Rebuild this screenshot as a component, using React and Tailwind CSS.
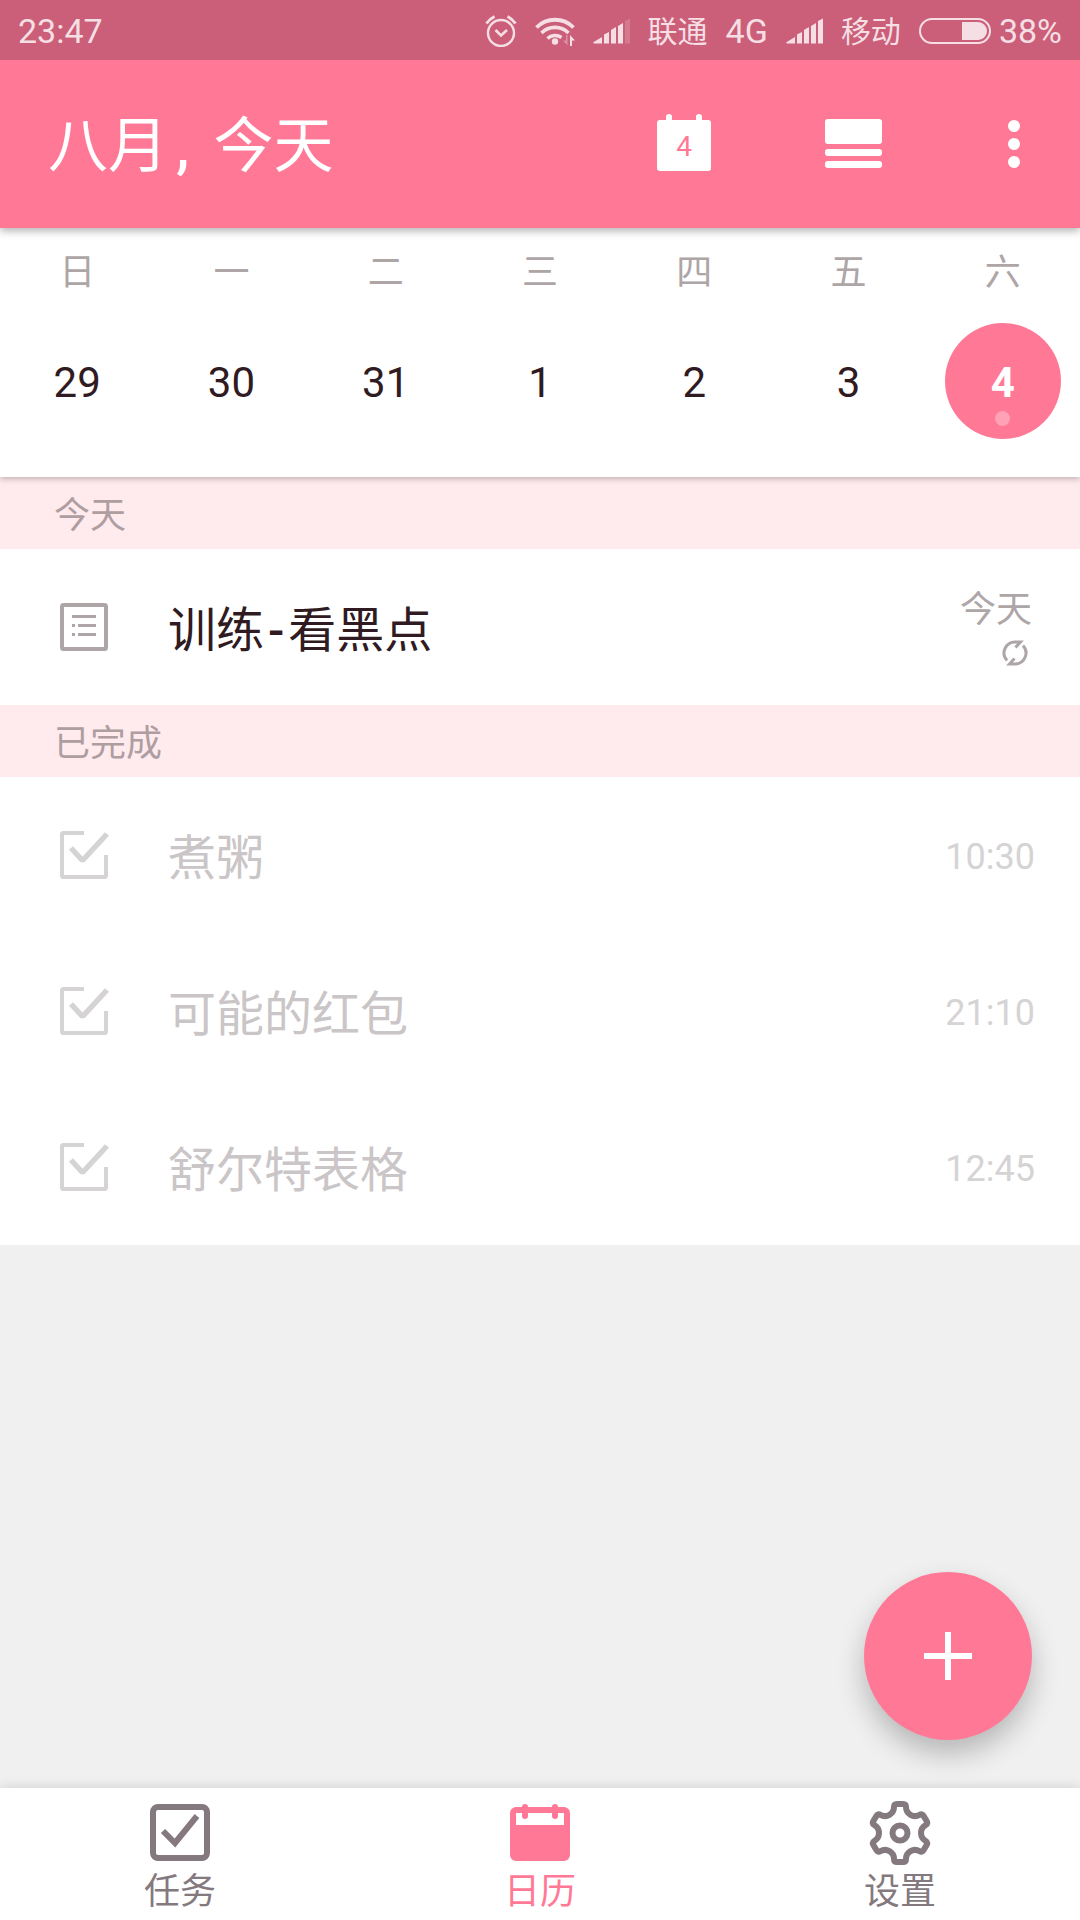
const week = [
  { label: "日", day: 29 },
  { label: "一", day: 30 },
  { label: "二", day: 31 },
  { label: "三", day: 1 },
  { label: "四", day: 2 },
  { label: "五", day: 3 },
  { label: "六", day: 4, today: true },
];

const doneTasks = [
  { title: "煮粥", time: "10:30" },
  { title: "可能的红包", time: "21:10" },
  { title: "舒尔特表格", time: "12:45" },
];

const AlarmIcon = () => (
  <svg width="32" height="32" viewBox="0 0 32 32" fill="none" stroke="currentColor">
    <circle cx="16" cy="18" r="13" strokeWidth="2.4" />
    <path d="M10.5 15l5.5 5.5 6-5.5" strokeWidth="2.6" />
    <path d="M1.5 8.5Q4.5 4 9.5 1.5M30.5 8.5Q27.5 4 22.5 1.5" strokeWidth="3" />
  </svg>
);

const WifiIcon = () => (
  <svg width="40" height="32" viewBox="0 0 40 32" fill="none" stroke="currentColor">
    <path d="M1.5 12.5a26 26 0 0 1 37 0" strokeWidth="3.8" />
    <path d="M6.5 18a19 19 0 0 1 27 0" strokeWidth="3.6" />
    <path d="M12.5 23.5a11 11 0 0 1 14 -1" strokeWidth="3.4" />
    <circle cx="20" cy="26.5" r="3.2" fill="currentColor" stroke="none" />
    <path d="M32.5 20v10.5l-4.5-5h3V20z" fill="currentColor" stroke="none" opacity="0.4" />
    <path d="M35 31V20l5 5.500h-3V31z" fill="currentColor" stroke="none" />
  </svg>
);

const SignalIcon = ({ weak }) => (
  <svg width="37" height="26" viewBox="0 0 37 26" fill="currentColor">
    <path d="M0 24.5L9 19v6.5H1z" />
    <path d="M11 16.5l5-2.5v11.5h-5z" />
    <path d="M18 12l5-3v16.5h-5z" />
    <path d="M25 8l5-3v20.5h-5z" />
    <path d="M32 3l5-2.5v25h-5z" opacity={weak ? 0.2 : 1} />
  </svg>
);

const BatteryIcon = () => (
  <svg width="72" height="26" viewBox="0 0 72 26">
    <rect x="1" y="1" width="70" height="24" rx="12" fill="none" stroke="currentColor" strokeWidth="2" />
    <path d="M43 4h16a9 9 0 0 1 0 18H43z" fill="currentColor" />
  </svg>
);

const ListIcon = () => (
  <svg width="50" height="50" viewBox="0 0 50 50" fill="currentColor">
    <rect x="2" y="3" width="44" height="44" rx="1.5" fill="none" stroke="currentColor" strokeWidth="4" />
    <path d="M12 13h24v3H12zM12 22h3v3h-3zM18 22h18v3H18zM12 31h3v3h-3zM18 31h18v3H18z" />
  </svg>
);

const DoneIcon = () => (
  <svg width="50" height="50" viewBox="0 0 50 50" fill="none" stroke="currentColor" strokeWidth="4">
    <path d="M24 3H3.5Q2 3 2 4.5v41Q2 47 3.5 47h41Q46 47 46 45.5V25" />
    <path d="M11 18l11.5 12.5L47 4" strokeWidth="5.5" strokeLinejoin="bevel" />
  </svg>
);

const RepeatIcon = () => (
  <svg width="26" height="26" viewBox="0 0 26 26" fill="none" stroke="currentColor" strokeWidth="3">
    <path d="M5 20.5A11 11 0 0 1 13 2h5.5l-5 5.5" />
    <path d="M21 5.5A11 11 0 0 1 13 24H7.5l5-5.5" />
  </svg>
);

const TasksIcon = () => (
  <svg width="64" height="64" viewBox="0 0 64 64" fill="none" stroke="currentColor" strokeWidth="6">
    <rect x="5" y="6" width="54" height="51" rx="5" />
    <path d="M15 30l12 12 22-27" />
  </svg>
);

const CalendarIcon = () => (
  <svg width="64" height="64" viewBox="0 0 64 64" fill="currentColor">
    <path
      fillRule="evenodd"
      d="M8 6h48a6 6 0 0 1 6 6v42a6 6 0 0 1-6 6H8a6 6 0 0 1-6-6V12a6 6 0 0 1 6-6zM8 12v12h48V12z"
    />
    <path d="M17 6v9M47 6v9" stroke="currentColor" strokeWidth="6" strokeLinecap="round" />
  </svg>
);

// one tooth and one valley, turned six times round the hub
const gearPath = () => {
  const turn = (x, y, i) => {
    const a = (i * Math.PI) / 3;
    const px = 32 + x * Math.cos(a) - y * Math.sin(a);
    const py = 32 + x * Math.sin(a) + y * Math.cos(a);
    return `${px.toFixed(2)} ${py.toFixed(2)}`;
  };
  let d = `M${turn(-6, -26, 0)}`;
  for (let i = 0; i < 6; i++) {
    d += `Q${turn(-6, -29, i)} ${turn(-3, -29, i)}L${turn(3, -29, i)}`;
    d += `Q${turn(6, -29, i)} ${turn(6, -26, i)}A9 9 0 0 0 ${turn(-6, -26, i + 1)}`;
  }
  return d + "Z";
};

const GearIcon = () => (
  <svg width="64" height="64" viewBox="0 0 64 64" fill="none" stroke="currentColor" strokeWidth="6">
    <path d={gearPath()} strokeLinejoin="round" />
    <circle cx="32" cy="32" r="7.5" />
  </svg>
);

const tabs = [
  { label: "任务", icon: TasksIcon },
  { label: "日历", icon: CalendarIcon, active: true },
  { label: "设置", icon: GearIcon },
];

const StatusBar = () => (
  <div className="z-30 flex h-[60px] items-center justify-between bg-[#cb5f79] pt-0.5 pr-[18px] pl-[18px] text-[34px] text-[#f5dfe4]">
    <span>23:47</span>
    <div className="flex items-center gap-[18px]">
      <AlarmIcon />
      <WifiIcon />
      <SignalIcon weak />
      <span className="text-[30px]">联通</span>
      <span>4G</span>
      <SignalIcon />
      <span className="text-[30px]">移动</span>
      <div className="flex items-center gap-2">
        <BatteryIcon />
        <span>38%</span>
      </div>
    </div>
  </div>
);

const Header = () => (
  <header className="z-20 flex h-[168px] items-center justify-between bg-[#ff7997] pl-12 text-white shadow-[0_3px_8px_rgba(0,0,0,0.3)]">
    <h1 className="flex pt-1.5 text-[60px]">
      <span>八月</span>
      <span className="pr-6 pl-2 font-medium">,</span>
      <span>今天</span>
    </h1>
    <div className="flex h-full">
      <button aria-label="回到今天" className="flex w-[150px] items-center justify-center">
        <svg width="54" height="62" viewBox="0 0 54 62" fill="currentColor">
          <rect y="7" width="54" height="51" rx="3" />
          <path d="M12 4v6M42 4v6" stroke="currentColor" strokeWidth="6" strokeLinecap="round" />
          <text x="27" y="43" textAnchor="middle" className="fill-[#ff7997] text-[28px]">4</text>
        </svg>
      </button>
      <button aria-label="切换视图" className="flex w-[189px] items-center justify-center">
        <svg width="57" height="50" viewBox="0 0 57 50" fill="currentColor">
          <rect width="57" height="25" rx="3" />
          <rect y="30" width="57" height="7" rx="3" />
          <rect y="42" width="57" height="7" rx="3" />
        </svg>
      </button>
      <button aria-label="更多" className="flex w-[132px] items-center justify-center">
        <svg width="12" height="48" viewBox="0 0 12 48" fill="currentColor">
          <circle cx="6" cy="6" r="6" />
          <circle cx="6" cy="24" r="6" />
          <circle cx="6" cy="42" r="6" />
        </svg>
      </button>
    </div>
  </header>
);

const WeekStrip = () => (
  <div className="z-10 grid grid-cols-7 bg-white pt-[18px] pb-[38px] text-center shadow-[0_2px_6px_rgba(0,0,0,0.25)]">
    {week.map((d) => (
      <div key={d.label} className="flex flex-col items-center gap-[23px]">
        <span className="text-4xl leading-[54px] text-[#aea5a7]">{d.label}</span>
        <button
          className={
            d.today
              ? "relative size-[116px] rounded-full bg-[#ff7997] pt-0.5 text-[42px] font-bold text-white"
              : "size-[116px] rounded-full pt-0.5 text-[42px] text-[#2f1b21]"
          }
        >
          {d.day}
          {d.today && <span className="absolute bottom-[13px] left-[50px] size-[15px] rounded-full bg-[#ffa2b7]" />}
        </button>
      </div>
    ))}
  </div>
);

const SectionTitle = ({ children }) => (
  <h2 className="flex h-[72px] items-center bg-[#ffebee] pt-1.5 pl-[54px] text-4xl text-[#ae9da1]">{children}</h2>
);

const App = () => {
  return (
    <div className="flex min-h-screen flex-col bg-[#f0f0f0] font-['Roboto','Noto_Sans_CJK_SC',sans-serif]">
      <StatusBar />
      <Header />
      <WeekStrip />

      <main className="flex-1">
        <SectionTitle>今天</SectionTitle>
        <div className="flex h-[156px] items-center bg-white pr-12 pl-[60px]">
          <span className="mr-[58px] text-[#aea5a7]">
            <ListIcon />
          </span>
          <p className="flex flex-1 pt-2 text-5xl text-[#2f1b21]">
            <span>训练</span>
            <span className="px-1 font-medium">-</span>
            <span>看黑点</span>
          </p>
          <div className="flex flex-col items-end text-[#aea5a7]">
            <span className="text-4xl leading-[44px]">今天</span>
            <span className="pt-2 pr-1">
              <RepeatIcon />
            </span>
          </div>
        </div>

        <SectionTitle>已完成</SectionTitle>
        <ul className="bg-white">
          {doneTasks.map((task) => (
            <li key={task.title} className="flex h-[156px] items-center pr-[45px] pl-[60px] text-[#d5d3d4]">
              <label className="flex flex-1 items-center">
                <input type="checkbox" defaultChecked className="sr-only" />
                <span className="mr-[58px]">
                  <DoneIcon />
                </span>
                <span className="pt-2 text-5xl text-[#cac5c6]">{task.title}</span>
              </label>
              <span className="pt-1 text-4xl">{task.time}</span>
            </li>
          ))}
        </ul>
      </main>

      <button
        aria-label="添加任务"
        className="fixed right-12 bottom-[180px] flex size-[168px] items-center justify-center rounded-full bg-[#ff7997] text-white shadow-[0_14px_28px_rgba(0,0,0,0.24)]"
      >
        <svg width="48" height="48" viewBox="0 0 48 48" stroke="currentColor" strokeWidth="6">
          <path d="M24 0v48M0 24h48" />
        </svg>
      </button>

      <nav className="grid grid-cols-3 bg-white pt-[13px] pb-1 shadow-[0_-2px_10px_rgba(0,0,0,0.1)]">
        {tabs.map(({ label, icon: Icon, active }) => (
          <a
            key={label}
            href="#"
            className={`flex flex-col items-center gap-[3px] text-4xl leading-[48px] ${active ? "text-[#ff7997]" : "text-[#84797e]"}`}
          >
            <Icon />
            <span>{label}</span>
          </a>
        ))}
      </nav>
    </div>
  );
};

export default App;
